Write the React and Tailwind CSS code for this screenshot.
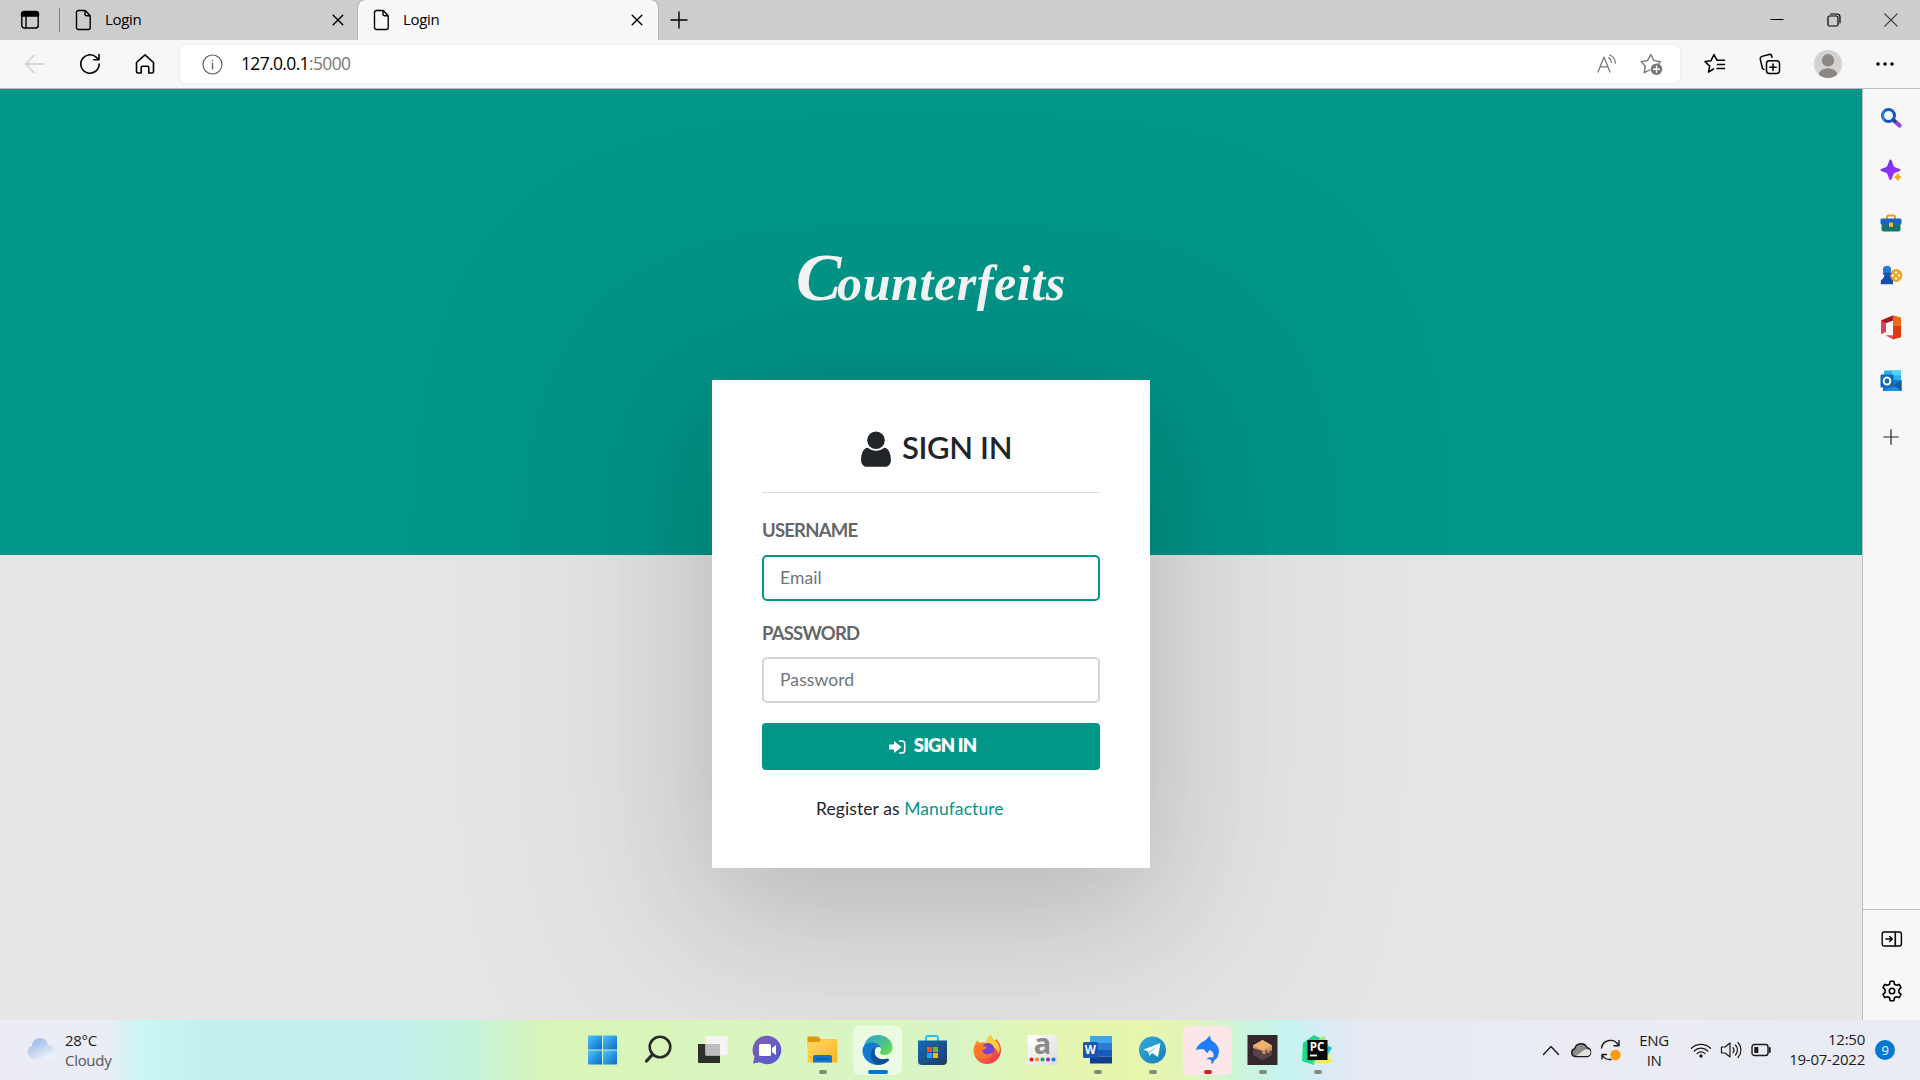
import React from "react";

const Svg = ({ w = 24, h = 24, vb, children, className = "" }) => (
  <svg
    width={w}
    height={h}
    viewBox={vb || `0 0 ${w} ${h}`}
    fill="none"
    stroke="currentColor"
    strokeWidth="1.4"
    strokeLinecap="round"
    strokeLinejoin="round"
    className={`shrink-0 ${className}`}
  >
    {children}
  </svg>
);

const PageIcon = () => (
  <Svg w={18} h={22} className="text-black">
    <path d="M3.500 1.500h6.800l4.900 5.200v11.800a2 2 0 0 1-2 2H3.500a2 2 0 0 1-2-2v-15a2 2 0 0 1 2-2z M10 1.600v3.600a1.600 1.600 0 0 0 1.600 1.600h3.500" />
  </Svg>
);

const CloseIcon = () => (
  <Svg w={12} h={12} className="text-black">
    <path d="M1.200 1.200l9.600 9.600M10.800 1.200L1.200 10.800" />
  </Svg>
);

function TabBar() {
  return (
    <div className="flex h-10 shrink-0 items-center bg-[#cdcdcd] text-[15px] text-black">
      <div className="flex h-full w-[59px] items-center justify-center">
        <Svg w={20} h={20}>
          <rect x="1.800" y="2" width="16.400" height="16" rx="2.500" />
          <path d="M1.500 6V4a2.500 2.500 0 0 1 2.500-2.500h12A2.500 2.500 0 0 1 18.500 4v2z" fill="currentColor" />
          <path d="M6 6v12" />
        </Svg>
      </div>
      <div className="h-6 w-px bg-[#808080]" />
      <div className="flex h-full w-[298px] items-center pr-[14px] pl-[15px]">
        <PageIcon />
        <span className="ml-3 flex-1 pb-[2px] tracking-[-0.3px]">Login</span>
        <CloseIcon />
      </div>
      <div className="flex h-full w-[300px] items-center rounded-t-lg bg-[#f7f7f7] pr-[15px] pl-[15px] shadow-[0_0_2px_rgba(0,0,0,0.35)]">
        <PageIcon />
        <span className="ml-3 flex-1 pb-[2px] tracking-[-0.3px]">Login</span>
        <CloseIcon />
      </div>
      <div className="flex w-[42px] justify-center">
        <Svg w={18} h={18}>
          <path d="M9 1v16M1 9h16" />
        </Svg>
      </div>
      <div className="ml-auto flex h-full items-center">
        <div className="flex w-[57px] justify-center">
          <Svg w={14} h={14}><path d="M.5 6.500h13" strokeWidth="1" strokeLinecap="butt" /></Svg>
        </div>
        <div className="flex w-[57px] justify-center">
          <Svg w={14} h={14}>
            <rect x="1" y="3" width="10" height="10" rx="1.500" strokeWidth="1.200" />
            <path d="M3.500 1h6.500a3 3 0 0 1 3 3v6" strokeWidth="1.200" />
          </Svg>
        </div>
        <div className="flex w-[58px] justify-center">
          <Svg w={14} h={14} className="text-[#333]"><path d="M.8.8l12.400 12.400M13.200.8L.8 13.200" strokeWidth="1.100" /></Svg>
        </div>
      </div>
    </div>
  );
}

function AddressBar() {
  return (
    <div className="flex h-[49px] shrink-0 items-center border-b border-[#bdbdbd] bg-[#f7f7f7] text-black">
      <div className="flex w-[180px] items-center pl-[24px]">
        <Svg w={22} h={20} className="text-[#cfcfcf]">
          <path d="M20.500 10H2M10 1.500L1.500 10l8.500 8.500" />
        </Svg>
        <Svg w={22} h={22} className="ml-[33px]">
          <path d="M20.200 11a9.200 9.200 0 1 1-3-6.800l2 2M20 1.500v5.200h-5.200" strokeWidth="1.600" />
        </Svg>
        <Svg w={20} h={22} className="ml-[34px]">
          <path d="M1.500 9.500L10 1.800l8.500 7.700V18.500a1.500 1.500 0 0 1-1.500 1.500h-3.200v-5.500a1.300 1.300 0 0 0-1.300-1.300h-5a1.300 1.300 0 0 0-1.300 1.300V20H3a1.500 1.500 0 0 1-1.500-1.500z" strokeWidth="1.600" />
        </Svg>
      </div>
      <div className="flex h-[38px] w-[1500px] items-center rounded-md bg-white pl-[22px] shadow-[0_0_3px_rgba(0,0,0,0.1)]">
        <Svg w={21} h={21} className="text-[#666]">
          <circle cx="10.500" cy="10.500" r="9.500" strokeWidth="1.200" />
          <path d="M10.500 9.500v5.500M10.500 6.400v.3" />
        </Svg>
        <span className="ml-[18px] flex-1 pb-[2px] text-[17.500px] tracking-[-0.650px]">
          127.0.0.1<span className="text-[#777]">:5000</span>
        </span>
        <Svg w={20} h={20} className="mr-[23px] text-[#777]">
          <path d="M1 18L7 3l6 15M3.200 12.800h7.600M11.800 3.600a6 6 0 0 1 2.600 5M12.800 1a9.500 9.500 0 0 1 5.600 8.200" strokeWidth="1.300" />
        </Svg>
        <Svg w={24} h={24} className="mr-[16px] text-[#777]">
          <path d="M9.500 18l-5.200 2.700 1-6.500L1.200 9.600l6.300-1L10.800 2.500l3.200 6.100 6.600 1-2 1.900" strokeWidth="1.400" />
          <circle cx="16.500" cy="17.200" r="5.800" fill="currentColor" stroke="none" />
          <path d="M16.500 14.200v6M13.500 17.200h6" stroke="#fff" />
        </Svg>
      </div>
      <div className="flex flex-1 items-center">
        <div className="flex w-[70px] justify-center">
          <Svg w={22} h={22}>
            <path d="M9.500 16l-5 3.200 1.200-6.200L1 8.600l6-.9L10 1.500l2.900 5.700h7.600M13.500 11.500h7M13 15.500h7.500" strokeWidth="1.500" />
          </Svg>
        </div>
        <div className="flex w-[40px] justify-center">
          <Svg w={22} h={22}>
            <rect x="7.500" y="7.800" width="13" height="12.700" rx="2.800" strokeWidth="1.500" />
            <path d="M14 11v6.400M10.800 14.200h6.400M5 16.500l-1.500-1L1.300 6.300a2.400 2.400 0 0 1 1.800-2.900L10 1.500a2.300 2.300 0 0 1 2.800 1.600l.2 1.200" strokeWidth="1.500" />
          </Svg>
        </div>
        <div className="flex w-[76px] justify-center">
          <Svg w={28} h={28}>
            <circle cx="14" cy="14" r="14" fill="#d4d2d0" stroke="none" />
            <circle cx="14" cy="10.300" r="6.200" fill="#8d8885" stroke="none" />
            <path d="M4.500 24.200a9.800 8 0 0 1 19 0A14 14 0 0 1 4.500 24.200z" fill="#8d8885" stroke="none" />
          </Svg>
        </div>
        <div className="flex w-[38px] justify-center">
          <Svg w={18} h={6}>
            <g fill="currentColor" stroke="none"><circle cx="2" cy="3" r="1.700" /><circle cx="9" cy="3" r="1.700" /><circle cx="16" cy="3" r="1.700" /></g>
          </Svg>
        </div>
      </div>
    </div>
  );
}

const field =
  "block h-[46px] w-full shrink-0 rounded-[5px] border-2 bg-white px-4 pb-[1px] text-[17.500px] tracking-[0.1px] text-[#495057] placeholder:text-[#6c757d] placeholder:opacity-100 outline-none";
const fieldLabel = "text-[18.500px] leading-[26px] font-bold tracking-[-0.800px] text-[#666]";

function LoginPage() {
  return (
    <main className="flex h-full flex-1 flex-col items-center overflow-hidden bg-[linear-gradient(#009688_466px,#e6e6e6_466px)] font-['Lato',sans-serif] text-[#212529]">
      <h1 className="mt-[143px] flex h-[100px] items-baseline justify-center pt-[10px] whitespace-nowrap font-['Liberation_Serif',serif] text-[50px] leading-[70px] font-bold tracking-[0.600px] text-[#f8f8f8] italic">
        <span className="-mr-[5px] text-[68px]">C</span>
        <span>ounterfeits</span>
      </h1>
      <section className="mt-[48px] flex h-[488px] w-[438px] shrink-0 flex-col bg-white px-[50px] pt-[50px] shadow-[0_36px_230px_128px_rgba(0,0,0,0.05),0_36px_119px_0_rgba(0,0,0,0.16)]">
        <h3 className="flex h-[63px] shrink-0 items-start justify-center border-b border-[#ddd] pl-[11px]">
          <Svg w={30} h={36} className="mt-px text-[#212529]">
            <g fill="currentColor" stroke="none">
              <circle cx="15" cy="9.300" r="8.800" />
              <path d="M7 16.800c4 4 12 4 16 0c5 .2 6.900 6.500 6.900 12.400c0 4-2.500 6.600-6 6.600H6.100c-3.500 0-6-2.600-6-6.600C.1 23.300 2 17 7 16.800z" />
            </g>
          </Svg>
          <span className="ml-[11px] text-[31px] leading-[34px] font-semibold tracking-[-0.350px]">SIGN IN</span>
        </h3>
        <label className={`mt-[24px] h-[38px] ${fieldLabel}`}>USERNAME</label>
        <input className={`${field} border-[#009688]`} placeholder="Email" />
        <label className={`mt-[19px] h-[37px] ${fieldLabel}`}>PASSWORD</label>
        <input className={`${field} border-[#ced4da]`} placeholder="Password" />
        <button className="mt-[20px] flex h-[47px] shrink-0 items-center justify-center gap-[8px] rounded bg-[#009688] pb-[2px] pl-[3px] text-[18.500px] font-extrabold tracking-[-0.800px] text-white">
          <Svg w={17} h={14} className="mt-[3px]">
            <path d="M0 4.500h5V1l7.500 6L5 13V9.500H0z" fill="#fff" stroke="none" />
            <path d="M10.500 1H13a2.700 2.700 0 0 1 2.700 2.700v6.600A2.700 2.700 0 0 1 13 13h-2.500" strokeWidth="1.600" />
          </Svg>
          SIGN IN
        </button>
        <p className="mt-[26px] pl-[54px] text-[17.500px] leading-[26px] tracking-[0.080px]">
          Register as <span className="text-[#009688]">Manufacture</span>
        </p>
      </section>
    </main>
  );
}

function Sidebar() {
  return (
    <aside className="flex w-[58px] shrink-0 flex-col items-center border-l border-[#bdbdbd] bg-[#f7f7f7] pr-px text-[#222]">
      <div className="mt-[2px] flex h-[53px] items-center">
        <Svg w={22} h={22}>
          <path d="M13.500 13l6 5.500" stroke="#8b46e0" strokeWidth="4.200" />
          <path d="M13 12.500l2 1.800" stroke="#383a55" strokeWidth="3" />
          <circle cx="8.500" cy="8.500" r="6" stroke="#1657c4" strokeWidth="3" />
          <path d="M4.300 12.700a6 6 0 0 1 0-8.400" stroke="#2b88d8" strokeWidth="1.600" />
        </Svg>
      </div>
      <div className="flex h-[53px] items-center">
        <Svg w={22} h={23}>
          <defs><linearGradient id="spark" x1="0" y1="0" x2="1" y2="1"><stop stopColor="#5a3af2" /><stop offset="1" stopColor="#b52cf0" /></linearGradient></defs>
          <path d="M10.500.5c1.800 0 2.200 6 3.800 7.200s6.200 1.800 6.200 3.300-4.500 2-6.200 3.200-2 6.800-3.800 6.800-2.200-5.500-3.800-6.800S.5 12.500.5 11s4.500-2 6.200-3.300S8.700.5 10.500.5z" fill="url(#spark)" stroke="none" />
          <path d="M17.800 13.500c.9 2.500 1.400 3.300 4.200 4.500c-2.800 1.200-3.300 2-4.200 4.500c-.9-2.500-1.500-3.300-4.300-4.500c2.800-1.200 3.400-2 4.300-4.500z" fill="#f0ac18" stroke="none" />
        </Svg>
      </div>
      <div className="flex h-[52px] items-center">
        <Svg w={22} h={18}>
          <path d="M7 5V3a1.500 1.500 0 0 1 1.500-1.500h5A1.500 1.500 0 0 1 15 3v2" stroke="#e5a420" strokeWidth="2" />
          <path d="M1.500 8h19v7.500a2 2 0 0 1-2 2h-15a2 2 0 0 1-2-2z" fill="#18756d" stroke="none" />
          <rect x=".5" y="4.500" width="21" height="6" rx="1.500" fill="#1c62c8" stroke="none" />
          <rect x="9" y="8.500" width="4" height="4.500" rx="1" fill="#f3bd35" stroke="none" />
        </Svg>
      </div>
      <div className="flex h-[52px] items-center">
        <Svg w={23} h={20}>
          <g stroke="none">
            <circle cx="16" cy="10.500" r="6.400" fill="#e9a52c" />
            <g fill="#fff3ce"><circle cx="16" cy="7.500" r="1.200" /><circle cx="19" cy="10.500" r="1.200" /><circle cx="16" cy="13.500" r="1.200" /><circle cx="13" cy="10.500" r="1.200" /></g>
            <path d="M4.500 8H9.800c0 4 1 5.500 3.200 7.500v3.800H.8v-3.800C3.500 13.500 4.500 12 4.500 8z" fill="#164fb0" />
            <circle cx="7" cy="4.800" r="4.100" fill="#247bd0" />
            <rect x="2.800" y="7.600" width="8.500" height="2.200" rx="1" fill="#1554ae" />
          </g>
        </Svg>
      </div>
      <div className="flex h-[53px] items-center">
        <Svg w={22} h={25}>
          <g stroke="none">
            <path d="M13 .5l8 2.300v19.400l-8 2.300z" fill="#dd3b0a" />
            <path d="M13 .5l8 2.300v8.200h-8z" fill="#f06b16" />
            <path d="M13 .5v5L6 8v9l-5 2.200V5.500z" fill="#d1465c" />
            <path d="M13 .5v5L6 8 1 5.500z" fill="#a51820" />
            <path d="M5.500 20.300h7.500V24.500z" fill="#df4964" />
          </g>
        </Svg>
      </div>
      <div className="flex h-[53px] items-center">
        <Svg w={22} h={22}>
          <g stroke="none">
            <rect x="4" y=".5" width="17" height="10" rx="1" fill="#28b2ec" /><rect x="12" y=".5" width="9" height="5" fill="#50d3fa" />
            <path d="M3 10h18.500v11H3z" fill="#127bd0" /><path d="M13 15.500l8.500-5V21z" fill="#0e5b9d" />
            <path d="M13 15.500L21.500 21H5z" fill="#1b91df" />
            <rect x=".5" y="4.500" width="13" height="13" rx="1.200" fill="#1066ba" />
          </g>
          <ellipse cx="7" cy="11" rx="3.300" ry="3.600" stroke="#fff" strokeWidth="2" />
        </Svg>
      </div>
      <div className="flex h-[60px] items-center">
        <Svg w={16} h={16}><path d="M8 .7v14.600M.7 8h14.600" strokeWidth="1.200" /></Svg>
      </div>
      <div className="mt-auto -mr-px flex h-[111px] w-[57px] flex-col items-center border-t border-[#bdbdbd] text-black">
        <div className="flex h-[57px] items-center">
          <Svg w={22} h={18}>
            <rect x="1.200" y="2" width="19.200" height="14" rx="2" /><path d="M14.300 2v14M5 9h6M8.700 6.500L11.200 9l-2.500 2.500" strokeWidth="1.600" />
          </Svg>
        </div>
        <div className="flex h-[48px] items-center">
          <Svg w={22} h={22}>
            <path d="M9.200 1.300h3.600l.7 2.900 1.900 1.100 2.800-.9 1.800 3.200-2.100 2v2.800l2.100 2-1.800 3.200-2.800-.9-1.900 1.100-.7 2.900H9.200l-.7-2.900-1.900-1.100-2.800.9L2 14.400l2.100-2V9.600L2 7.600l1.800-3.200 2.800.9 1.900-1.100z" strokeWidth="1.600" />
            <circle cx="11" cy="11" r="2.700" strokeWidth="1.600" />
          </Svg>
        </div>
      </div>
    </aside>
  );
}

const Gradient = ({ id, from, to }) => (
  <linearGradient id={id} x1="0" y1="0" x2="1" y2="1"><stop stopColor={from} /><stop offset="1" stopColor={to} /></linearGradient>
);

const apps = [
  { name: "start", art: <g fill="url(#win)"><path d="M2 .5H15v14H1v-13a1 1 0 0 1 1-1z" /><path d="M16 .5h13a1 1 0 0 1 1 1v13H16z" /><path d="M1 15.500h14v14H2a1 1 0 0 1-1-1z" /><path d="M16 15.500h14v13a1 1 0 0 1-1 1H16z" /></g> },
  { name: "search", art: <g fill="none" stroke="#2b2b29" strokeLinecap="round"><circle cx="18" cy="12" r="10.300" strokeWidth="2.600" /><path d="M10.500 19.500l-6 6.500" strokeWidth="3.200" /></g> },
  { name: "tasks", art: <g><path d="M1 9h22v19H2a1 1 0 0 1-1-1z" fill="#2e2e2b" /><rect x="8.500" y="1" width="22" height="19.500" rx="1" fill="#f4f4f4" /><path d="M8.500 9H23v11.500H8.500z" fill="#bdbdbd" /></g> },
  { name: "chat", art: <g><path d="M15.500.8A14.200 14.200 0 1 1 8 27.300L1 28.500l1.500-6.500A14.200 14.200 0 0 1 15.500.8z" fill="url(#chat)" /><rect x="7" y="9" width="12" height="12" rx="1.500" fill="#fff" /><path d="M20 13l4-3v10l-4-3z" fill="#fff" /></g> },
  { name: "files", run: true, art: <g><path d="M.5 2.500a1 1 0 0 1 1-1H11l3 3H29V12H.5z" fill="#dc9a0a" /><path d="M.5 7H12l3-2.500h15.500v22a1 1 0 0 1-1 1h-28a1 1 0 0 1-1-1z" fill="url(#folder)" /><path d="M6 27.500V22a2 2 0 0 1 2-2h15a2 2 0 0 1 2 2v5.500z" fill="#1175cc" /><path d="M9 24h13" stroke="#0a4f9b" /></g> },
  { name: "browser", active: true, art: <g><path d="M2 10.500C4 4 9 0 16 0c8 0 14.500 5.500 14.500 12.500 0 4.500-3.500 7.500-8 7.500-3 0-5-1.200-4.200-3 2.200-4-1.300-7.500-5.800-7.500-5 0-8.800 2.500-10.500 1z" fill="url(#edge)" /><path d="M.5 15.500C.5 10 5 7.500 10 7.500c4.500 0 8 2.300 8.800 5.200-3-2-6.300.2-6.300 4.300 0 5 5.500 8.500 11 7 2.500-.8 4 .2 2.500 1.800C23.500 28.500 20 30 15.500 30 7.500 30 .5 23.500.5 15.500z" fill="#1378cf" /><path d="M10.500 14C7 20 9 27.500 16 30c4.500-.2 8-1.500 10.500-4.200 1.800-2-.2-2.600-3-1.800-5.500 1.500-11-2-11-7 0-2 .5-3 1.200-4z" fill="#0d5296" /></g> },
  { name: "store", art: <g><path d="M9 8V3a2 2 0 0 1 2-2h8a2 2 0 0 1 2 2v5" fill="none" stroke="#28c2f0" strokeWidth="2" /><path d="M1 5.500h29V26a4 4 0 0 1-4 4H5a4 4 0 0 1-4-4z" fill="url(#store)" /><path d="M10 12h5v5h-5z" fill="#f25022" /><path d="M16 12h5v5h-5z" fill="#7fba00" /><path d="M10 18h5v5h-5z" fill="#18aaf0" /><path d="M16 18h5v5h-5z" fill="#ffb900" /></g> },
  { name: "fox", art: <g><path d="M5 5.500l3 2.500c2-1 4-1 6 0 .5-4 3-6.500 5-8 .5 3 2 4 4 5.500l1.500-1.500C28 8 29 11.500 29 15.500 29 23 22.500 29 15 29S1.500 23 1.500 15.500C1.500 11.500 3 9 5 5.500z" fill="url(#fox)" /><path d="M19 0c.5 3 2 4 4 5.500 5 4 5.500 9 3.500 13.500C25 12 18 11 14 8c.5-4 3-6.500 5-8z" fill="#ffce35" /><circle cx="16" cy="14.500" r="6.500" fill="#7642d1" /><path d="M3 11c5-2 9-.5 12 1.500-1.500 2-3 2-5 2.500 1 5 7 6 11 2-1 7-12 9-16 3z" fill="#ff7627" /></g> },
  { name: "shop", art: <g><path d="M.5 0h30v30H.5z" fill="url(#paper)" /><text x="15.500" y="18.500" textAnchor="middle" fontFamily="Open Sans, sans-serif" fontWeight="700" fontSize="29" fill="#8a8a8a">a</text><circle cx="4.500" cy="24.500" r="2" fill="#e4101c" /><circle cx="10" cy="24.500" r="2" fill="#f08c1e" /><circle cx="15.500" cy="24.500" r="2" fill="#16a34e" /><circle cx="21" cy="24.500" r="2" fill="#8d32cf" /><circle cx="26.500" cy="24.500" r="2" fill="#0c7fd8" /></g> },
  { name: "word", run: true, art: <g><path d="M8 1h22v7H8z" fill="#41a5ee" /><path d="M8 8h22v7H8z" fill="#2b7cd3" /><path d="M8 15h22v6.500H8z" fill="#185abd" /><path d="M8 21.500h22v7H8z" fill="#103f91" /><rect x="1" y="7" width="15" height="16" rx="1.500" fill="#1857b5" /><text x="8.300" y="19.200" textAnchor="middle" fontFamily="Open Sans, sans-serif" fontWeight="700" fontSize="11.500" fill="#fff">W</text></g> },
  { name: "telegram", run: true, art: <g><circle cx="15.500" cy="15" r="13.500" fill="url(#tg)" /><path d="M6.500 14.500L23.500 8 21 22l-6-4-2.500 3-1.500-4.500z" fill="#fff" /><path d="M11 16.500L20.500 11 13 18v3z" fill="#a9d5ec" /></g> },
  { name: "dolphin", alert: true, art: <path d="M3.500 15C6 10 9 7 13 5.500c1.500-.5 2-2.500 5-5 .3 2 .2 3.500 1.500 5C26 9 29 15.500 25.500 22c-.8 1.800-2 2.500-3.500 3.500 0 1.500-1 2.500-2 3.500-1-1-.5-2.500-1-4-1.500-.8-3-.5-4.500-1 2-1.800 4-2 6.500-1.500 1.500-3.500 0-6.500-4-7.500l-1 3c-2-.5-3-1.500-3.800-3.500C8.500 14 6 14 3.500 15z" fill="#1f7cff" /> },
  { name: "cube", run: true, art: <g><path d="M.5 0h30v30H.5z" fill="#35282c" /><path d="M15.500 5L25 10.500V20l-9.500 5.500L6 20v-9.500z" fill="#584347" /><path d="M15.500 5L25 10.500v5h-2.500v2H20v-3l-1.500 1v3.500h-3V16L6 13v-2.500z" fill="#d5985c" /><path d="M15.500 5L25 10.500 15.500 15 6 10.500z" fill="#eeb172" /></g> },
  { name: "pycharm", run: true, art: <g><path d="M1 8L12 0l8 4-8 26L0 26z" fill="#21d789" /><path d="M16 5l6-4 5 10 3 1-3 8-9 5z" fill="#9bea68" /><path d="M24 10l6 3-4 5z" fill="#18b8f0" /><path d="M9 29l15-11 7 9-11 2-6-2z" fill="#f1ed49" /><rect x="5.500" y="5" width="20" height="20" fill="#070907" /><text x="15" y="16" textAnchor="middle" fontFamily="Open Sans, sans-serif" fontWeight="700" fontSize="11.500" fill="#fff">PC</text><path d="M8 20.500h7" stroke="#fff" strokeWidth="1.800" /></g> },
];

function TaskbarApp({ app }) {
  return (
    <div className="flex w-[55px] flex-col items-center">
      <div className={`flex h-[49px] w-[49px] flex-col items-center rounded-md pt-[9px] ${app.active ? "bg-white/50" : app.alert ? "bg-[#fde6e7]" : ""}`}>
        <svg width="31" height="31" viewBox="0 0 31 31" className="shrink-0 overflow-visible">{app.art}</svg>
        {app.active && <div className="mt-[4px] h-1 w-5 shrink-0 rounded-full bg-[#0078d4]" />}
        {app.run && <div className="mt-[4px] h-1 w-2 shrink-0 rounded-full bg-[#7f8b75]" />}
        {app.alert && <div className="mt-[4px] h-1 w-2 shrink-0 rounded-full bg-[#c92a1f]" />}
      </div>
    </div>
  );
}

function Taskbar() {
  return (
    <footer className="flex h-[60px] shrink-0 bg-[linear-gradient(90deg,#ebecf6_0,#ebedf6_105px,#cbf7f4_140px,#c0efee_220px,#c0efee_380px,#c4f3dc_470px,#d9f5b8_550px,#d9f5be_700px,#d9f5c4_960px,#e3f6b2_1050px,#e8f6ad_1140px,#e2f5b9_1190px,#ccf5dc_1240px,#c5f3f1_1290px,#dcebf6_1330px,#e8eaf3_1375px,#ebecf3_1600px,#e9ebf5_1920px)] text-[#1b1b1b]">
      <div className="flex w-[575px] pl-[26px]">
        <svg width="30" height="23" viewBox="0 0 30 23" className="mt-[17px]">
          <defs><Gradient id="cloudA" from="#98b9ee" to="#d0def1" /><Gradient id="cloudB" from="#a8c1e3" to="#fafcff" /></defs>
          <circle cx="14" cy="9" r="8" fill="url(#cloudA)" />
          <path d="M7 22a7 7 0 0 1 0-13.500c4-.5 7 1 9 4A7 7 0 1 1 24 22z" fill="url(#cloudB)" />
        </svg>
        <div className="mt-[10px] ml-[9px] text-[15px] leading-5 tracking-[-0.300px]">
          <div>28°C</div>
          <div className="text-[#555]">Cloudy</div>
        </div>
      </div>
      <div className="flex shrink-0 pt-[6px]">
        <svg width="0" height="0"><defs>
          <Gradient id="win" from="#4cc6fb" to="#0869ca" /><Gradient id="chat" from="#7f5fb3" to="#5558d2" /><Gradient id="folder" from="#ffd765" to="#fab71f" />
          <Gradient id="edge" from="#289edf" to="#6ae243" /><Gradient id="store" from="#146bb8" to="#213a63" /><Gradient id="fox" from="#ffac25" to="#ef2558" /><Gradient id="paper" from="#ffffff" to="#dcdcdc" /><Gradient id="tg" from="#32abdf" to="#147fb7" />
        </defs></svg>
        {apps.map((a) => <TaskbarApp key={a.name} app={a} />)}
      </div>
      <div className="ml-auto flex h-full items-center text-[15px] leading-5 tracking-[-0.400px]">
        <div className="flex w-[30px] justify-center"><Svg w={18} h={12} className="text-[#1b1b1b]"><path d="M1.500 10.500L9 2.500l7.500 8" /></Svg></div>
        <div className="flex w-[30px] justify-center">
          <Svg w={22} h={16}><path d="M5 14.500a4 4 0 0 1-.3-7.800A6.500 6.500 0 0 1 17 5.800a4.500 4.500 0 0 1 .5 8.700z" fill="#8b8b8b" /><path d="M6 14L15 7.500l3.500-.2a3.500 3.500 0 0 1-1 6.700z" fill="#e2e2e2" stroke="none" /></Svg>
        </div>
        <div className="flex w-[30px] justify-center">
          <Svg w={22} h={22}><path d="M1.500 9A9 9 0 0 1 18.500 6.500M19 1.500v5.200h-5M2 20v-4.500h4.500M2.200 16A9 9 0 0 0 11 20.500" /><circle cx="15.500" cy="16" r="5.200" fill="#ff9a0a" stroke="none" /></Svg>
        </div>
        <div className="w-[56px] text-center"><div>ENG</div><div>IN</div></div>
        <div className="flex w-[38px] justify-center">
          <Svg w={22} h={16}><path d="M1.500 6.200a13.500 13.500 0 0 1 19 0M4.200 9a9.500 9.500 0 0 1 13.600 0M7 11.600a5.600 5.600 0 0 1 8 0" strokeWidth="1.300" /><circle cx="11" cy="14" r="1.700" fill="currentColor" stroke="none" /></Svg>
        </div>
        <div className="flex w-[22px] justify-center">
          <Svg w={22} h={18}><path d="M1.500 6h3.700L10 2v14l-4.800-4H1.500zM13 6.500a4 4 0 0 1 0 5M15.500 4a7.500 7.500 0 0 1 0 10M18 1.500a11 11 0 0 1 0 15" strokeWidth="1.200" /></Svg>
        </div>
        <div className="flex w-[38px] justify-center">
          <Svg w={21} h={14}><rect x="1" y="1.500" width="16" height="11" rx="2.500" /><rect x="3.300" y="4" width="4" height="6" fill="currentColor" stroke="none" /><path d="M18.700 5v4" strokeWidth="2" /></Svg>
        </div>
        <div className="w-[85px] pb-[2px] text-right tracking-[-0.250px]"><div>12:50</div><div>19-07-2022</div></div>
        <div className="mr-[25px] ml-[10px] flex h-5 w-5 items-center justify-center rounded-full bg-[#0078d4] text-[13px] text-white">9</div>
      </div>
    </footer>
  );
}

export default function App() {
  return (
    <div className="flex h-[1080px] w-[1920px] flex-col overflow-hidden font-['Open_Sans','Noto_Sans',sans-serif]">
      <TabBar />
      <AddressBar />
      <div className="flex min-h-0 flex-1">
        <LoginPage />
        <Sidebar />
      </div>
      <Taskbar />
    </div>
  );
}
